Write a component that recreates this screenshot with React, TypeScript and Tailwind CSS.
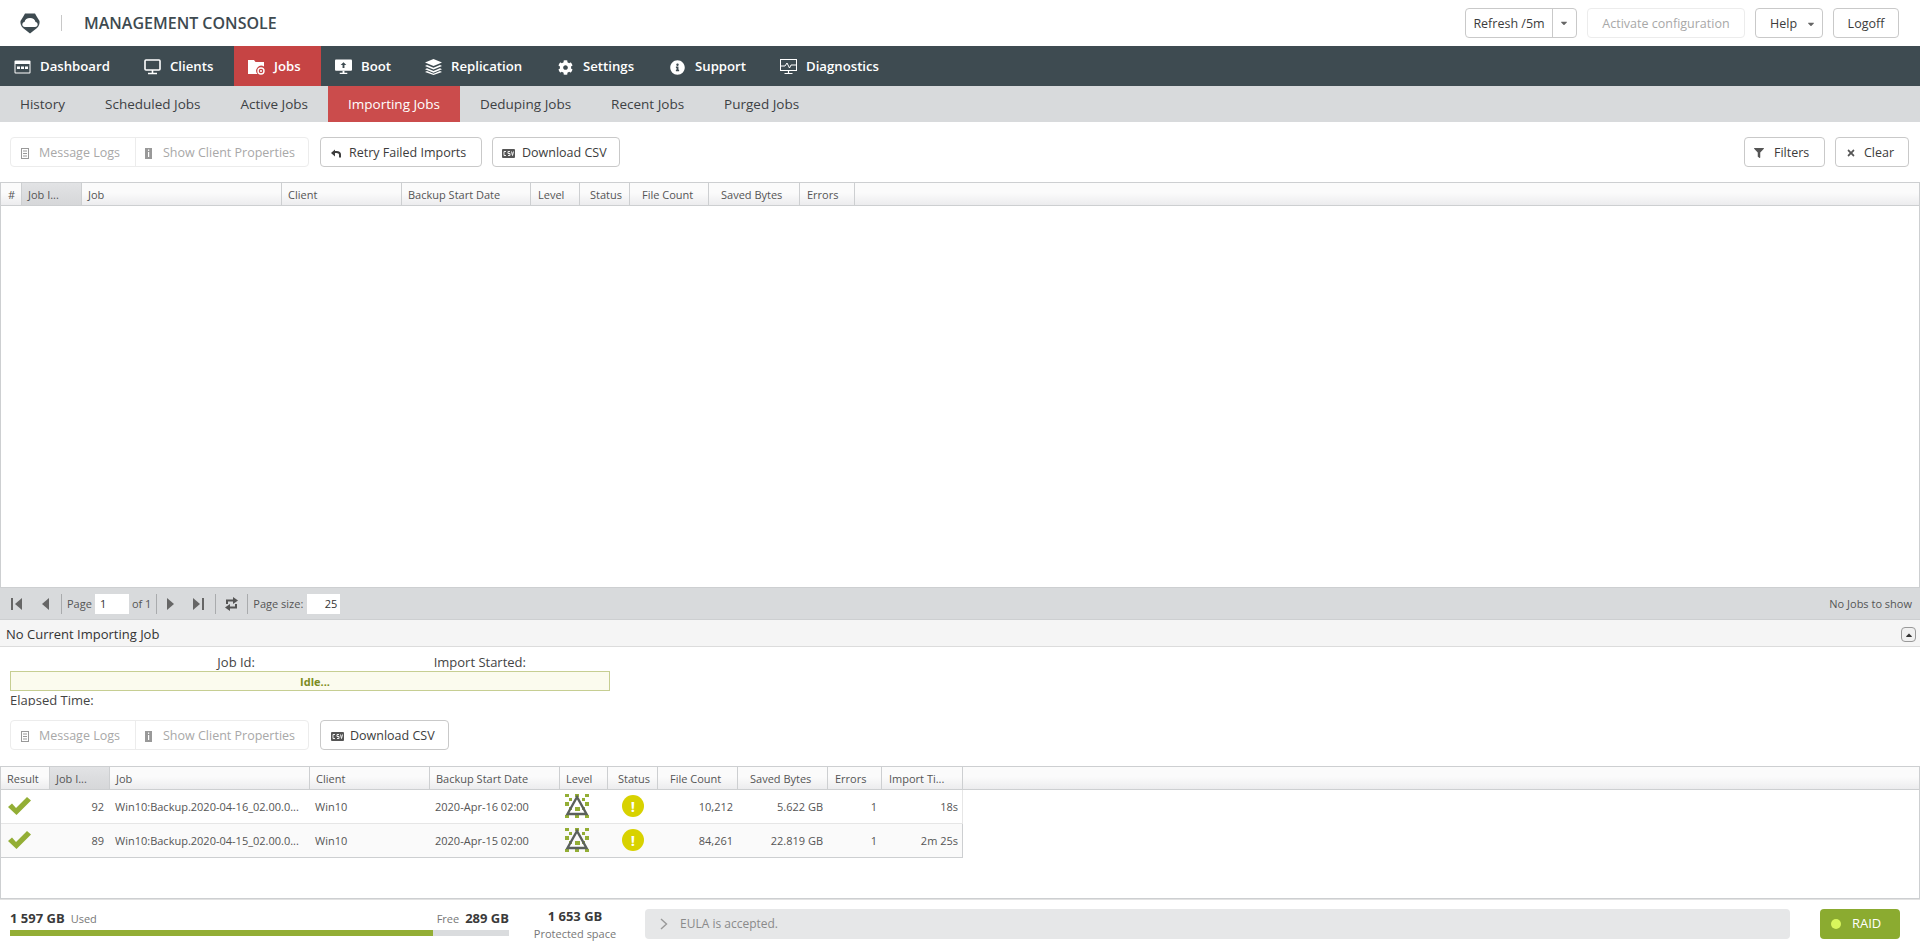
import { FaCog, FaInfoCircle, FaFilter, FaTimes, FaCaretDown, FaCaretUp } from "react-icons/fa";

const Logo = () => (
  <svg width="20" height="21" viewBox="0 0 20 21">
    <path d="M5 0.5H15L17 4L19.5 8Q20 12 17 15L10 20.5L3 15Q0 12 0.5 8L3 4Z" fill="#3e4b51" />
    <path d="M5 14C1.5 14 1.5 9.5 4.5 9C5 6.5 7 5 10 5C13 5 15 6.5 15.5 9C18.5 9.5 18.5 14 15 14Z" fill="#fff" />
  </svg>
);

const DashIcon = () => (
  <svg width="17" height="14" viewBox="0 0 17 14" fill="none">
    <rect x="0.5" y="0.5" width="16" height="13" rx="1" fill="#fff" />
    <rect x="1.5" y="4" width="14" height="8.5" fill="#3e4b51" />
    <rect x="3" y="6.5" width="3" height="2.5" fill="#fff" />
    <rect x="7" y="6.5" width="3" height="2.5" fill="#fff" />
    <rect x="11" y="6.5" width="3" height="2.5" fill="#fff" />
  </svg>
);

const ClientIcon = () => (
  <svg width="17" height="16" viewBox="0 0 17 16" fill="none">
    <rect x="1" y="1" width="15" height="10" rx="1" stroke="#fff" strokeWidth="1.6" />
    <path d="M8.5 11v3M4 14.5h9" stroke="#fff" strokeWidth="1.6" />
  </svg>
);

const JobsIcon = () => (
  <svg width="17" height="16" viewBox="0 0 17 16">
    <path d="M0 1h6l1.5 2H16v4.5A5 5 0 0 0 9.5 15H0Z" fill="#fff" />
    <circle cx="13" cy="12" r="3" fill="none" stroke="#fff" strokeWidth="1.4" />
    <circle cx="13" cy="12" r="1" fill="#fff" />
  </svg>
);

const BootIcon = () => (
  <svg width="18" height="16" viewBox="0 0 18 16">
    <path d="M1 0h16a1 1 0 0 1 1 1v10a1 1 0 0 1-1 1H1a1 1 0 0 1-1-1V1a1 1 0 0 1 1-1Z" fill="#fff" />
    <path d="M9 3l3 3h-2v3H8V6H6Z" fill="#3e4b51" />
    <path d="M8 12h2v2h3v1.5H5V14h3Z" fill="#fff" />
  </svg>
);

const ReplicationIcon = () => (
  <svg width="17" height="16" viewBox="0 0 17 16" fill="#fff">
    <path d="M8.5 0L17 3.5 8.5 7 0 3.5Z" />
    <path d="M2 6l6.5 2.7L15 6l2 1-8.5 3.5L0 7Z" />
    <path d="M2 9.2l6.5 2.7L15 9.2l2 1-8.5 3.5L0 10.2Z" />
    <path d="M2 12l6.5 2.7L15 12l2 1-8.5 3L0 13Z" />
  </svg>
);

const DiagIcon = () => (
  <svg width="17" height="16" viewBox="0 0 17 16" fill="none" stroke="#fff">
    <rect x="0.5" y="0.5" width="16" height="11" strokeWidth="1" />
    <path d="M1 7h4l2-3 2.5 5L11 6h5" strokeWidth="1" />
    <path d="M8.5 12v2M4.5 14.5h8" strokeWidth="1.2" />
  </svg>
);

const LogIcon = () => (
  <svg width="8" height="11" viewBox="0 0 8 11" fill="none" stroke="#999">
    <rect x="0.5" y="0.5" width="7" height="10" />
    <path d="M2 3h4M2 5.5h4M2 8h4" />
  </svg>
);

const PropsIcon = () => (
  <svg width="7" height="11" viewBox="0 0 7 11">
    <rect width="7" height="11" fill="#999" />
    <rect x="3" y="1.5" width="1.2" height="1.4" fill="#fff" />
    <rect x="3" y="4" width="1.2" height="5" fill="#fff" />
  </svg>
);

const CsvIcon = () => (
  <svg width="13" height="9" viewBox="0 0 13 9">
    <rect width="13" height="9" rx="1" fill="#555" />
    <path d="M4 2.5H2v4h2M8 2.5H6v2h2v2H6M9.5 2.5l1 4 1-4" fill="none" stroke="#fff" strokeWidth="0.9" />
  </svg>
);

const RetryIcon = () => (
  <svg width="10" height="9" viewBox="0 0 10 9">
    <path d="M9 8.5V5.5C9 3.5 7.5 3 5.5 3H3" fill="none" stroke="#3c3c3c" strokeWidth="2" />
    <path d="M0 4L4 0.5V7.5Z" fill="#3c3c3c" />
  </svg>
);

const CheckIcon = () => (
  <svg width="24" height="18" viewBox="0 0 24 18">
    <path d="M1 10 L5 6.5 L9 11 L20 0 L24 3.5 L9.5 18 Z" fill="#93ae35" />
  </svg>
);

const LevelIcon = () => (
  <svg width="24" height="24" viewBox="0 0 24 24">
    <g fill="#93ae35">
      <rect x="0" y="0" width="4" height="3" />
      <rect x="10" y="0" width="4" height="3" />
      <rect x="20" y="0" width="4" height="3" />
      <rect x="4" y="4" width="3" height="3" />
      <rect x="17" y="4" width="3" height="3" />
      <rect x="0" y="8" width="4" height="4" />
      <rect x="20" y="8" width="4" height="4" />
      <rect x="4" y="13" width="3" height="3" />
      <rect x="10" y="13" width="5" height="4" />
      <rect x="17" y="13" width="3" height="3" />
      <rect x="0" y="21" width="4" height="3" />
      <rect x="10" y="21" width="4" height="3" />
      <rect x="20" y="21" width="4" height="3" />
    </g>
    <path d="M12 3L2.5 20h19Z" fill="none" stroke="#5a605c" strokeWidth="2.4" />
  </svg>
);

const WarnIcon = () => (
  <div className="flex h-[22px] w-[22px] items-center justify-center rounded-full bg-[#d8d200] text-[15px] font-bold leading-none text-white">
    !
  </div>
);

const First = () => (
  <svg width="11" height="12" viewBox="0 0 11 12" fill="#666">
    <rect width="2" height="12" />
    <path d="M11 0v12L4 6Z" />
  </svg>
);
const Prev = () => (
  <svg width="7" height="12" viewBox="0 0 7 12" fill="#666">
    <path d="M7 0v12L0 6Z" />
  </svg>
);
const Next = () => (
  <svg width="7" height="12" viewBox="0 0 7 12" fill="#666">
    <path d="M0 0v12l7-6Z" />
  </svg>
);
const Last = () => (
  <svg width="11" height="12" viewBox="0 0 11 12" fill="#666">
    <rect x="9" width="2" height="12" />
    <path d="M0 0v12l7-6Z" />
  </svg>
);
const RefreshIcon = () => (
  <svg width="13" height="14" viewBox="0 0 13 14" fill="#555">
    <path d="M2 7V3.5h7" fill="none" stroke="#555" strokeWidth="2" />
    <path d="M8 0l5 3.5-5 3.5Z" />
    <path d="M11 7v3.5H4" fill="none" stroke="#555" strokeWidth="2" />
    <path d="M5 7l-5 3.5 5 3.5Z" />
  </svg>
);
const Chevron = () => (
  <svg width="8" height="12" viewBox="0 0 8 12" fill="none" stroke="#999" strokeWidth="1.4">
    <path d="M1 1l5.5 5L1 11" />
  </svg>
);

const navItems = [
  { label: "Dashboard", icon: <DashIcon />, width: "w-[130px]" },
  { label: "Clients", icon: <ClientIcon />, width: "w-[104px]" },
  { label: "Jobs", icon: <JobsIcon />, width: "w-[87px]", active: true },
  { label: "Boot", icon: <BootIcon />, width: "w-[90px]" },
  { label: "Replication", icon: <ReplicationIcon />, width: "w-[132px]" },
  { label: "Settings", icon: <FaCog className="text-[15px]" />, width: "w-[112px]" },
  { label: "Support", icon: <FaInfoCircle className="text-[15px]" />, width: "w-[111px]" },
  { label: "Diagnostics", icon: <DiagIcon />, width: "w-[120px]" },
];

const subItems = ["History", "Scheduled Jobs", "Active Jobs", "Importing Jobs", "Deduping Jobs", "Recent Jobs", "Purged Jobs"];

const topCols = [
  { label: "#", w: "w-[21px]", cls: "pl-[7px]" },
  { label: "Job I...", w: "w-[60px]", cls: "pl-[6px] bg-[linear-gradient(#e2e3e5,#d6d7d9)]" },
  { label: "Job", w: "w-[200px]", cls: "pl-[6px]" },
  { label: "Client", w: "w-[120px]", cls: "pl-[6px]" },
  { label: "Backup Start Date", w: "w-[129px]", cls: "pl-[6px]" },
  { label: "Level", w: "w-[49px]", cls: "pl-[7px]" },
  { label: "Status", w: "w-[50px]", cls: "pl-[10px]" },
  { label: "File Count", w: "w-[79px]", cls: "pl-[12px]" },
  { label: "Saved Bytes", w: "w-[91px]", cls: "pl-[12px]" },
  { label: "Errors", w: "w-[55px]", cls: "pl-[7px]" },
];

const bottomCols = [
  { label: "Result", w: "w-[49px]", cls: "pl-[6px]" },
  { label: "Job I...", w: "w-[60px]", cls: "pl-[6px] bg-[linear-gradient(#e2e3e5,#d6d7d9)]" },
  { label: "Job", w: "w-[200px]", cls: "pl-[6px]" },
  { label: "Client", w: "w-[120px]", cls: "pl-[6px]" },
  { label: "Backup Start Date", w: "w-[130px]", cls: "pl-[6px]" },
  { label: "Level", w: "w-[48px]", cls: "pl-[6px]" },
  { label: "Status", w: "w-[50px]", cls: "pl-[10px]" },
  { label: "File Count", w: "w-[80px]", cls: "pl-[12px]" },
  { label: "Saved Bytes", w: "w-[90px]", cls: "pl-[12px]" },
  { label: "Errors", w: "w-[54px]", cls: "pl-[7px]" },
  { label: "Import Ti...", w: "w-[81px]", cls: "pl-[7px]" },
];

const rows = [
  { id: 92, job: "Win10:Backup.2020-04-16_02.00.0...", date: "2020-Apr-16 02:00", files: "10,212", bytes: "5.622 GB", time: "18s", bg: "bg-white" },
  { id: 89, job: "Win10:Backup.2020-04-15_02.00.0...", date: "2020-Apr-15 02:00", files: "84,261", bytes: "22.819 GB", time: "2m 25s", bg: "bg-[#fafafa]" },
];

const GridHeader = ({ cols }: { cols: typeof topCols }) => (
  <div className="flex h-[24px] shrink-0 border-y border-[#cdcfd1] bg-[linear-gradient(#fbfbfb_45%,#ececee)] text-[11px] text-[#555]">
    {cols.map((col) => (
      <div key={col.label} className={`flex items-center border-r border-[#cdcfd1] pt-[2px] ${col.w} ${col.cls}`}>
        {col.label}
      </div>
    ))}
  </div>
);

const DisabledGroup = () => (
  <div className="flex h-[30px] w-[299px] rounded border border-[#ececec] pt-[2px] text-[12.5px] text-[#a8a8a8]">
    <div className="-mt-[2px] flex w-[125px] items-center gap-[10px] border-r border-[#ececec] pl-[10px] pt-[2px]">
      <LogIcon />
      Message Logs
    </div>
    <div className="flex flex-1 items-center gap-[11px] pl-[9px]">
      <PropsIcon />
      Show Client Properties
    </div>
  </div>
);

const Button = ({ children, className }: { children: React.ReactNode; className: string }) => (
  <div className={`flex h-[30px] items-center rounded border border-[#c9c9c9] bg-white pt-[2px] text-[12.5px] text-[#3c3c3c] ${className}`}>
    {children}
  </div>
);

const Sep = () => <div className="h-[20px] w-px bg-[#a9abad]" />;

export default function App() {
  return (
    <div className="flex h-screen w-full flex-col overflow-hidden bg-white font-['Open_Sans',sans-serif]">
      <header className="flex h-[46px] shrink-0 items-center pl-[20px] pr-[21px]">
        <Logo />
        <div className="ml-[21px] h-[16px] w-px bg-[#c8c8c8]" />
        <div className="ml-[22px] text-[16px] font-semibold text-[#3e4a50]">MANAGEMENT CONSOLE</div>
        <div className="ml-auto flex gap-[10px]">
          <div className="flex h-[30px] w-[112px] rounded border border-[#c9c9c9] text-[12.5px] text-[#3c3c3c]">
            <div className="flex w-[87px] items-center justify-center border-r border-[#c9c9c9] pt-[2px]">Refresh /5m</div>
            <div className="flex flex-1 items-center justify-center pr-[2px] text-[10px] text-[#666]"><FaCaretDown /></div>
          </div>
          <div className="flex h-[30px] w-[158px] items-center justify-center rounded border border-[#ececec] pt-[2px] text-[12.5px] text-[#a8a8a8]">
            Activate configuration
          </div>
          <Button className="w-[68px] gap-[9px] pl-[14px]">
            Help
            <FaCaretDown className="text-[10px] text-[#666]" />
          </Button>
          <Button className="w-[66px] justify-center">Logoff</Button>
        </div>
      </header>

      <nav className="flex h-[40px] shrink-0 bg-[#3e4b51] text-[13.2px] font-semibold text-white">
        {navItems.map((item) => (
          <div
            key={item.label}
            className={`flex items-center gap-[9px] pl-[14px] pt-[2px] ${item.width} ${item.active ? "bg-[#c64444]" : ""}`}
          >
            <span className="flex w-[17px] justify-center">{item.icon}</span>
            {item.label}
          </div>
        ))}
      </nav>

      <div className="flex h-[36px] shrink-0 bg-[#d8dadc] text-[13.5px] text-[#3d4144]">
        {subItems.map((item) => (
          <div
            key={item}
            className={`flex items-center px-[20px] pt-px ${item === "Importing Jobs" ? "bg-[#cb4c4c] text-white" : ""}`}
          >
            {item}
          </div>
        ))}
      </div>

      <div className="flex h-[60px] shrink-0 items-start pl-[10px] pr-[11px] pt-[15px]">
        <DisabledGroup />
        <Button className="ml-[11px] w-[162px] gap-[8px] pl-[10px]">
          <RetryIcon />
          Retry Failed Imports
        </Button>
        <Button className="ml-[10px] w-[128px] gap-[7px] pl-[9px]">
          <CsvIcon />
          Download CSV
        </Button>
        <Button className="ml-auto w-[81px] gap-[10px] pl-[9px]">
          <FaFilter className="text-[10px] text-[#555]" />
          Filters
        </Button>
        <Button className="ml-[10px] w-[74px] gap-[8px] pl-[10px]">
          <FaTimes className="text-[10px] text-[#555]" />
          Clear
        </Button>
      </div>

      <div className="flex flex-1 flex-col border-x border-[#cdcfd1]">
        <GridHeader cols={topCols} />
      </div>

      <div className="flex h-[33px] shrink-0 items-center border-y border-[#cdcfd1] bg-[#d8dadc] pl-[11px] pr-[8px] pt-px text-[11px] text-[#555]">
        <First />
        <div className="ml-[20px]"><Prev /></div>
        <div className="ml-[12px]"><Sep /></div>
        <span className="ml-[5px]">Page</span>
        <div className="ml-[3px] flex h-[20px] w-[34px] items-center bg-white pl-[5px] text-[#333]">1</div>
        <span className="ml-[3px]">of 1</span>
        <div className="ml-[5px]"><Sep /></div>
        <div className="ml-[10px]"><Next /></div>
        <div className="ml-[19px]"><Last /></div>
        <div className="ml-[11px]"><Sep /></div>
        <div className="ml-[9px]"><RefreshIcon /></div>
        <div className="ml-[9px]"><Sep /></div>
        <span className="ml-[5px]">Page size:</span>
        <div className="ml-[4px] flex h-[20px] w-[33px] items-center justify-end bg-white pr-[3px] text-[#333]">25</div>
        <span className="ml-auto">No Jobs to show</span>
      </div>

      <div className="flex h-[27px] shrink-0 items-center border-b border-[#dcdcdc] bg-[#f5f5f5] pl-[6px] pr-[4px] pt-[3px] text-[13px] text-[#333]">
        No Current Importing Job
        <div className="ml-auto flex h-[15px] w-[15px] items-center justify-center rounded border border-[#999] bg-[#f0f0f0] text-[10px] text-[#333]">
          <FaCaretUp />
        </div>
      </div>

      <div className="h-[59px] shrink-0 overflow-hidden pl-[10px] pt-[7px] text-[13px] leading-[17px] text-[#444]">
        <div className="flex">
          <div className="w-[245px] text-right">Job Id:</div>
          <div className="w-[271px] text-right">Import Started:</div>
        </div>
        <div className="flex h-[20px] w-[600px] items-center justify-center border border-[#c6ce92] bg-[#fbfbee] pl-[10px] text-[11px] font-bold text-[#7b8c22]">
          Idle...
        </div>
        <div className="leading-[18px]">Elapsed Time:</div>
      </div>

      <div className="flex h-[60px] shrink-0 items-start pl-[10px] pt-[14px]">
        <DisabledGroup />
        <Button className="ml-[11px] w-[129px] gap-[6px] pl-[10px]">
          <CsvIcon />
          Download CSV
        </Button>
      </div>

      <div className="flex h-[133px] shrink-0 flex-col border-x border-b border-[#cdcfd1]">
        <GridHeader cols={bottomCols} />
        <div className="w-[962px] text-[11px] text-[#555]">
          {rows.map((row) => (
            <div key={row.id} className={`flex h-[34px] items-center border-b border-r border-[#e6e6e6] last:border-[#cdcfd1] ${row.bg}`}>
              <div className="-mt-[2px] w-[49px] pl-[6px]"><CheckIcon /></div>
              <div className="w-[60px] pr-[6px] pt-[2px] text-right">{row.id}</div>
              <div className="w-[200px] pl-[5px] pt-[2px]">{row.job}</div>
              <div className="w-[120px] pl-[5px] pt-[2px]">Win10</div>
              <div className="w-[130px] pl-[5px] pt-[2px]">{row.date}</div>
              <div className="-mt-[1px] w-[48px] pl-[5px]"><LevelIcon /></div>
              <div className="-mt-[1px] flex w-[50px] justify-center"><WarnIcon /></div>
              <div className="w-[80px] pr-[5px] pt-[2px] text-right">{row.files}</div>
              <div className="w-[90px] pr-[5px] pt-[2px] text-right">{row.bytes}</div>
              <div className="w-[54px] pr-[5px] pt-[2px] text-right">1</div>
              <div className="w-[80px] pr-[4px] pt-[2px] text-right">{row.time}</div>
            </div>
          ))}
        </div>
      </div>

      <footer className="flex h-[47px] shrink-0 items-start border-t border-[#e2e2e2] pl-[10px] pr-[20px] text-[#555]">
        <div className="w-[499px] pt-[8px]">
          <div className="flex h-[22px] items-center">
            <span className="text-[13px] font-bold text-[#3a3a3a]">1 597 GB</span>
            <span className="ml-[6px] text-[11px] text-[#777]">Used</span>
            <span className="ml-auto text-[11px] text-[#777]">Free</span>
            <span className="ml-[6px] text-[13px] font-bold text-[#3a3a3a]">289 GB</span>
          </div>
          <div className="h-[6px] bg-[#dadcde]">
            <div className="h-full w-[423px] bg-[#93ae35]" />
          </div>
        </div>
        <div className="ml-[25px] flex w-[82px] flex-col items-center pt-[6px]">
          <span className="text-[13px] font-bold leading-[20px] text-[#3a3a3a]">1 653 GB</span>
          <span className="whitespace-nowrap text-[11px] leading-[15px] text-[#777]">Protected space</span>
        </div>
        <div className="ml-[29px] mt-[9px] flex h-[30px] flex-1 items-center rounded bg-[#e6e7e8] pl-[15px] text-[12px] text-[#8a8a8a]">
          <Chevron />
          <span className="ml-[12px]">EULA is accepted.</span>
        </div>
        <div className="ml-[30px] mt-[9px] flex h-[30px] w-[80px] items-center rounded bg-[#8bab30] pl-[11px] text-[13px] text-white">
          <div className="h-[10px] w-[10px] rounded-full bg-[#d8f65c]" />
          <span className="ml-[11px]">RAID</span>
        </div>
      </footer>
    </div>
  );
}
